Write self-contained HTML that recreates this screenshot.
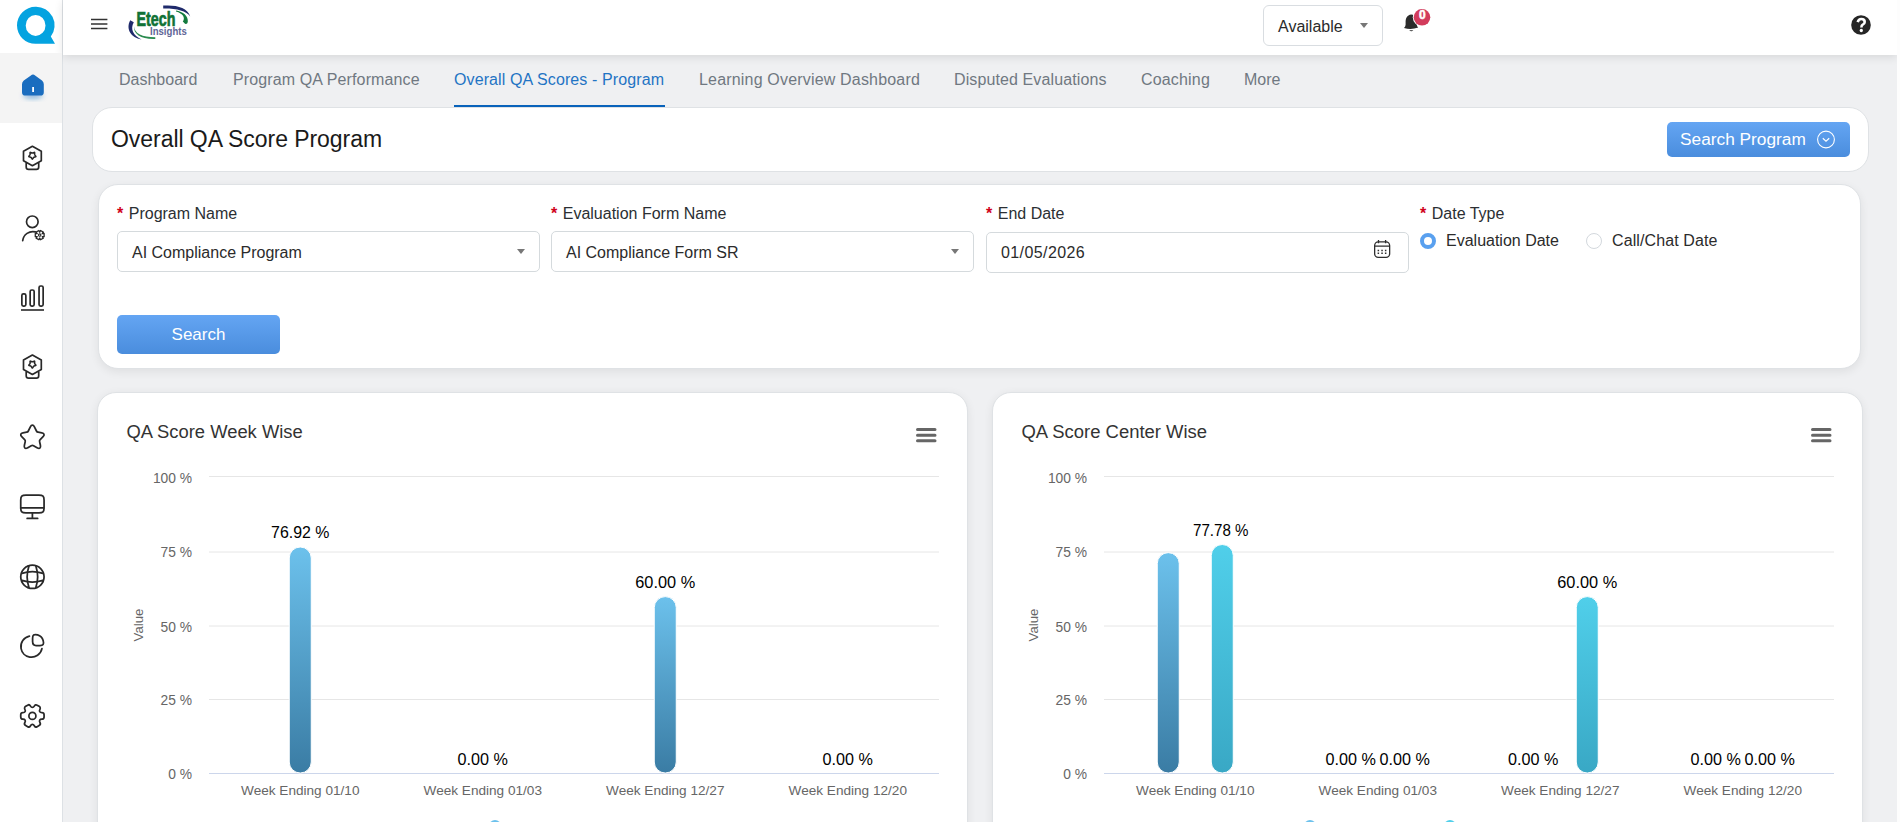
<!DOCTYPE html>
<html><head><meta charset="utf-8">
<style>
*{box-sizing:border-box;margin:0;padding:0}
html,body{width:1900px;height:822px;overflow:hidden;background:#eff0f2;font-family:"Liberation Sans",sans-serif;color:#222}
.abs{position:absolute}
#sidebar{position:absolute;left:0;top:0;width:63px;height:822px;background:#fff;border-right:1px solid #dde1e5}
#header{position:absolute;left:63px;top:0;width:1834px;height:55px;background:#fff;box-shadow:0 2px 9px rgba(0,0,0,.11)}
#rstrip{position:absolute;left:1897px;top:0;width:3px;height:822px;background:#fdfdfd}
.tab{position:absolute;top:70px;font-size:16px;color:#707881;white-space:nowrap;line-height:20px}
.tab.active{color:#1f74c4}
.card{position:absolute;background:#fff;border:1px solid #dfe2e5;border-radius:18px}
.lbl{position:absolute;top:204px;font-size:16px;color:#2b2f33;line-height:20px;white-space:nowrap}
.lbl b{color:#d0021b;font-weight:bold;margin-right:5.5px}
.inp{position:absolute;top:231px;height:41px;border:1px solid #d5dadd;border-radius:5px;background:#fff}
.inp span{position:absolute;left:14px;top:11px;font-size:16px;line-height:20px;color:#2b2b2b;white-space:nowrap}
.caret{position:absolute;width:0;height:0;border-left:4px solid transparent;border-right:4px solid transparent;border-top:5px solid #777}
.btn{position:absolute;background:linear-gradient(#64a5f3,#4a8ddd);border-radius:5px;color:#fff;white-space:nowrap}
svg{position:absolute;left:0;top:0;overflow:visible}
</style></head><body>
<div id="sidebar"></div>
<div id="header"></div>
<div id="rstrip"></div>

<!-- sidebar active item -->
<div class="abs" style="left:0;top:53px;width:62px;height:70px;background:#f4f4f4"></div>

<svg width="63" height="822" viewBox="0 0 63 822" style="left:0;top:0">
  <defs>
    <filter id="blur3" x="-50%" y="-50%" width="200%" height="200%"><feGaussianBlur stdDeviation="2.5"/></filter>
  </defs>
  <!-- Q logo -->
  <path fill="#04a3e0" fill-rule="evenodd" d="M35.5 6.8 A18.5 18.5 0 1 0 35.5 43.8 L55 43.8 L50.8 36.5 A18.5 18.5 0 0 0 35.5 6.8 Z M35.6 14.9 A9.9 10.5 0 1 1 35.6 35.9 A9.9 10.5 0 1 1 35.6 14.9 Z"/>
  <!-- home -->
  <ellipse cx="33" cy="95.5" rx="10" ry="3" fill="rgba(26,111,192,.5)" filter="url(#blur3)"/>
  <path fill="#1a6dbf" d="M30.9 75.4 Q33 73.8 35.1 75.4 L42 80.6 Q43.8 82 43.8 84.3 V92.2 Q43.8 95.6 40.4 95.6 H25.4 Q22 95.6 22 92.2 V84.3 Q22 82 23.8 80.6 Z"/>
  <rect x="32.2" y="87" width="1.8" height="5" fill="#fff"/>
  <g fill="none" stroke="#292929" stroke-width="1.7" stroke-linejoin="round" stroke-linecap="round">
    <!-- badge -->
    <g id="badge">
      <path d="M32.4 146.3 L41.3 151.2 V160.8 L32.4 165.7 L23.5 160.8 V151.2 Z"/>
      <path d="M26.2 163.2 V167 Q26.2 169.4 28.6 169.4 H36.3 Q38.7 169.4 38.7 167 V163.2"/>
      <path stroke-width="1.5" d="M32.65 158.94 Q32.35 159.40 32.05 158.94 L31.12 157.53 Q30.97 157.30 30.70 157.23 L29.08 156.78 Q28.55 156.64 28.89 156.20 L29.94 154.89 Q30.12 154.67 30.10 154.40 L30.02 152.72 Q30.00 152.16 30.52 152.36 L32.09 152.95 Q32.35 153.05 32.61 152.95 L34.18 152.36 Q34.70 152.16 34.68 152.72 L34.60 154.40 Q34.58 154.67 34.76 154.89 L35.81 156.20 Q36.15 156.64 35.62 156.78 L34.00 157.23 Q33.73 157.30 33.58 157.53 Z"/>
    </g>
    <use href="#badge" transform="translate(0 208.8)"/>
    <!-- person gear -->
    <circle cx="32.3" cy="221.8" r="5.8"/>
    <path d="M22.7 240.6 A10.2 10.2 0 0 1 35.4 231.9"/>
    <g transform="translate(39.7 235.1)">
      <path stroke-width="1.3" d="M2.51 -1.45 L4.42 -1.61 L4.42 1.61 L2.51 1.45 L3.60 3.02 L0.82 4.63 L0.00 2.90 L-0.82 4.63 L-3.60 3.02 L-2.51 1.45 L-4.42 1.61 L-4.42 -1.61 L-2.51 -1.45 L-3.60 -3.02 L-0.82 -4.63 L-0.00 -2.90 L0.82 -4.63 L3.60 -3.02 Z"/>
      <circle r="1.2" stroke-width="1.1"/>
    </g>
    <!-- bars -->
    <rect x="21.85" y="293.9" width="4" height="12.3" rx="1.6"/>
    <rect x="30.15" y="290" width="4" height="16.2" rx="1.6"/>
    <rect x="39.05" y="286" width="4.1" height="20.2" rx="1.6"/>
    <path stroke-linecap="butt" stroke-width="1.6" d="M21 310 H44"/>
    <!-- star -->
    <g transform="translate(18.4 422.8) scale(1.1667)" stroke-width="1.5">
      <path d="m13.73 3.51 1.76 3.52c.24.49.88.96 1.42 1.05l3.19.53c2.04.34 2.52 1.82 1.05 3.28l-2.48 2.48c-.42.42-.65 1.23-.52 1.81l.71 3.07c.56 2.43-.73 3.37-2.88 2.1l-2.99-1.77c-.54-.32-1.43-.32-1.980 0l-2.99 1.77c-2.14 1.27-3.44.32-2.88-2.1l.71-3.07c.13-.58-.1-1.39-.52-1.81l-2.48-2.48c-1.46-1.46-.99-2.94 1.05-3.28l3.19-.53c.53-.09 1.17-.56 1.41-1.05l1.76-3.52c.96-1.91 2.52-1.91 3.47 0Z"/>
    </g>
    <!-- monitor -->
    <g transform="translate(18.4 492.8) scale(1.1667)" stroke-width="1.5">
      <path d="M6.44 2h11.11C21.11 2 22 2.89 22 6.440v6.33c0 3.56-.89 4.44-4.44 4.44H6.44C2.89 17.22 2 16.33 2 12.78V6.44C2 2.89 2.89 2 6.44 2ZM12 17.22V22M2 13h20M7.5 22h9"/>
    </g>
    <!-- globe -->
    <g transform="translate(18.4 562.8) scale(1.1667)" stroke-width="1.5">
      <path d="M12 22c5.523 0 10-4.477 10-10S17.523 2 12 2 2 6.477 2 12s4.477 10 10 10Z"/>
      <path d="M8 3h1a28.424 28.424 0 0 0 0 18H8M15 3a28.424 28.424 0 0 1 0 18"/>
      <path d="M3 16v-1a28.424 28.424 0 0 0 18 0v1M3 9a28.424 28.424 0 0 1 18 0"/>
    </g>
    <!-- pie -->
    <g transform="translate(18.6 631.5) scale(1.1667)" stroke-width="1.5">
      <path d="M18.32 12c2.6 0 3.68-1 2.72-4.280-.65-2.210-2.55-4.110-4.76-4.760C12.96 2 12 3.080 12 5.680v2.880C12 11 13 12 15 12h3.320Z"/>
      <path d="M19.999 14.7a9.090 9.090 0 0 1-10.45 7.180c-3.790-.610-6.840-3.660-7.460-7.450A9.087 9.087 0 0 1 9.269 4.010"/>
    </g>
    <!-- gear -->
    <g transform="translate(18.4 701.9) scale(1.1667)" stroke-width="1.5">
      <path d="M12 15a3 3 0 1 0 0-6 3 3 0 0 0 0 6Z"/>
      <path d="M2 12.88v-1.76c0-1.040.85-1.900 1.900-1.900 1.810 0 2.550-1.280 1.640-2.850-.520-.900-.210-2.070.700-2.590l1.730-.990c.790-.470 1.810-.190 2.280.600l.110.190c.900 1.570 2.380 1.570 3.290 0l.110-.190c.470-.790 1.490-1.070 2.280-.600l1.730.990c.910.520 1.220 1.690.700 2.590-.910 1.570-.170 2.850 1.640 2.850 1.040 0 1.900.850 1.900 1.900v1.760c0 1.040-.850 1.900-1.900 1.900-1.810 0-2.550 1.280-1.640 2.850.520.910.210 2.070-.700 2.590l-1.730.990c-.790.470-1.810.190-2.280-.600l-.110-.190c-.900-1.570-2.380-1.570-3.290 0l-.110.190c-.470.790-1.490 1.070-2.280.600l-1.730-.990a1.899 1.899 0 0 1-.700-2.590c.910-1.570.170-2.850-1.640-2.850-1.050 0-1.900-.860-1.900-1.900Z"/>
    </g>
  </g>
</svg>

<svg width="1900" height="60" viewBox="0 0 1900 60">
  <!-- hamburger -->
  <path d="M91 19.5 H107.4 M91 24 H107.4 M91 28.4 H107.4" stroke="#333" stroke-width="1.5" fill="none"/>
  <!-- Etech logo -->
  <path d="M163.2 5.6 C176 4.6 187.5 7.5 190.2 16.5 C186.5 10.5 176 8.2 163.2 8.4 Z" fill="#1f2a6b"/>
  <path d="M176 10.4 C183 11.6 188.5 15.5 187.8 22 Q187.3 24.5 185 23.8 L182.8 21.6 C185.6 17.5 183 13.5 176 11.4 Z" fill="#137a3e"/>
  <path d="M130.2 20.3 L133.8 22.3 C130 29 133 35.5 141.5 39.5 C131 38 125.5 29 130.2 20.3 Z" fill="#1f2a6b"/>
  <path d="M134 26.5 C134.5 33.5 142 37.2 155.3 37.2 L155.3 39 C141 39.5 133.3 34 134 26.5 Z" fill="#2a8a4e"/>
  <text x="136.6" y="25.7" font-family="Liberation Sans" font-weight="bold" font-size="19.5" fill="#107236" stroke="#107236" stroke-width="0.7" textLength="38.8" lengthAdjust="spacingAndGlyphs">Etech</text>
  <text x="150" y="34.6" font-family="Liberation Sans" font-weight="bold" font-size="10" fill="#5f6696" textLength="36.8" lengthAdjust="spacingAndGlyphs">Insights</text>
  <!-- bell -->
  <path d="M1411.3 14.6 C1406.8 15 1405.6 18.8 1405.6 22.3 V24.8 Q1405.5 26.8 1404 28 Q1411 30 1418.2 27.6 Q1416.9 26.4 1416.7 24.4 V22.3 C1416.7 18.8 1415.8 15 1411.3 14.6 Z" fill="#2b2b2b"/>
  <path d="M1409.2 30.3 Q1411.3 32.4 1413.4 30.3 Z" fill="#2b2b2b"/>
  <circle cx="1422" cy="17.3" r="9.2" fill="#fff"/>
  <circle cx="1422" cy="17.3" r="8.3" fill="#d23c5c"/>
  <text x="1422.3" y="19.1" text-anchor="middle" font-family="Liberation Sans" font-weight="bold" font-size="12" fill="#fff" stroke="#fff" stroke-width="0.5">0</text>
  <!-- help -->
  <circle cx="1861" cy="25" r="9.8" fill="#262626"/>
  <path d="M1857.7 22.2 Q1858.6 19 1861.3 19 Q1864.7 19 1864.7 21.9 Q1864.7 23.7 1862.7 24.7 Q1861.4 25.4 1861.4 27.6" stroke="#fff" stroke-width="2.6" fill="none"/><circle cx="1861.3" cy="30.5" r="1.65" fill="#fff"/>
</svg>
<div class="abs" style="left:1263px;top:5px;width:120px;height:41px;border:1px solid #d9dde1;border-radius:6px;background:#fff"></div>
<div class="abs" style="left:1278px;top:17px;font-size:16px;line-height:20px;color:#2b2b2b">Available</div>
<div class="caret" style="left:1360px;top:23px"></div>


<div class="tab" style="left:119px">Dashboard</div>
<div class="tab" style="left:233px;letter-spacing:.12px">Program QA Performance</div>
<div class="tab active" style="left:454px;letter-spacing:.11px">Overall QA Scores - Program</div>
<div class="tab" style="left:699px;letter-spacing:.18px">Learning Overview Dashboard</div>
<div class="tab" style="left:954px;letter-spacing:.11px">Disputed Evaluations</div>
<div class="tab" style="left:1141px;letter-spacing:.17px">Coaching</div>
<div class="tab" style="left:1244px">More</div>
<div class="abs" style="left:454px;top:105px;width:211px;height:2px;background:#0862ba"></div>

<div class="card" style="left:92px;top:107px;width:1777px;height:65px;border-radius:20px"></div>
<div class="card" style="left:98px;top:184px;width:1763px;height:185px;border-radius:20px;box-shadow:0 3px 10px rgba(0,0,0,.07)"></div>
<div class="card" style="left:97px;top:392px;width:871px;height:460px;border-radius:19px;box-shadow:0 2px 10px rgba(0,0,0,.07)"></div>
<div class="card" style="left:992px;top:392px;width:871px;height:460px;border-radius:19px;box-shadow:0 2px 10px rgba(0,0,0,.07)"></div>

<div class="abs" style="left:111px;top:126px;font-size:23px;line-height:26px;color:#1a1a1a;white-space:nowrap;letter-spacing:-.05px">Overall QA Score Program</div>
<div class="btn" style="left:1667px;top:122px;width:183px;height:35px">
  <span class="abs" style="left:13px;top:7px;font-size:17.3px;line-height:20px">Search Program</span>
  <svg width="20" height="20" viewBox="0 0 20 20" style="left:149px;top:8px"><circle cx="10" cy="9.5" r="8.4" fill="none" stroke="#fff" stroke-width="1.1"/><path d="M6.8 8.3 L10 11.2 L13.2 8.3" fill="none" stroke="#fff" stroke-width="1.2"/></svg>
</div>

<div class="lbl" style="left:117px"><b>*</b>Program Name</div>
<div class="lbl" style="left:551px"><b>*</b>Evaluation Form Name</div>
<div class="lbl" style="left:986px"><b>*</b>End Date</div>
<div class="lbl" style="left:1420px"><b>*</b>Date Type</div>

<div class="inp" style="left:117px;width:423px"><span>AI Compliance Program</span><div class="caret" style="left:399px;top:17px"></div></div>
<div class="inp" style="left:551px;width:423px"><span>AI Compliance Form SR</span><div class="caret" style="left:399px;top:17px"></div></div>
<div class="inp" style="left:986px;top:232px;width:423px"><span style="letter-spacing:.4px;top:9.5px">01/05/2026</span>
  <svg width="22" height="22" viewBox="0 0 22 22" style="left:385.2px;top:5.2px">
    <rect x="2.65" y="3.85" width="15" height="15.5" rx="3.6" fill="none" stroke="#2e2e2e" stroke-width="1.3"/>
    <path d="M2.65 8.2 H17.65 M6.5 2 V5.3 M13.6 2 V5.3" stroke="#2e2e2e" stroke-width="1.3" fill="none"/>
    <path d="M5.6 12.5 h1.5 M9.3 12.5 h1.5 M12.9 12.5 h1.5 M5.6 15.2 h1.5 M9.3 15.2 h1.5 M12.9 15.2 h1.5" stroke="#2e2e2e" stroke-width="1.4"/>
  </svg>
</div>

<div class="abs" style="left:1420px;top:233px;width:16px;height:16px;border-radius:50%;border:4px solid #59a0ef;background:#fff"></div>
<div class="abs" style="left:1446px;top:231px;font-size:16px;line-height:20px;color:#2b2b2b;white-space:nowrap">Evaluation Date</div>
<div class="abs" style="left:1586px;top:233px;width:16px;height:16px;border-radius:50%;border:1px solid #d3d8dd;background:#fff"></div>
<div class="abs" style="left:1612px;top:231px;font-size:16px;line-height:20px;color:#2b2b2b;white-space:nowrap;letter-spacing:.1px">Call/Chat Date</div>

<div class="btn" style="left:117px;top:315px;width:163px;height:39px;text-align:center">
  <span style="display:block;margin-top:10px;font-size:17px;line-height:20px">Search</span>
</div>


<!-- CHARTS -->
<svg width="1900" height="822" viewBox="0 0 1900 822" font-family="Liberation Sans">
<defs><linearGradient id="g1" x1="0" y1="0" x2="0" y2="1"><stop offset="0" stop-color="#6cc1ec"/><stop offset="1" stop-color="#3a7ca4"/></linearGradient>
<linearGradient id="g2" x1="0" y1="0" x2="0" y2="1"><stop offset="0" stop-color="#50cfea"/><stop offset="1" stop-color="#39a8c5"/></linearGradient></defs>
<text x="126.5" y="437.5" font-size="18" fill="#333" textLength="176.2" lengthAdjust="spacingAndGlyphs">QA Score Week Wise</text>
<path d="M917.5 429.6 H935 M917.5 435.2 H935 M917.5 440.8 H935" stroke="#666" stroke-width="3" stroke-linecap="round"/>
<path d="M209 476.5 H939" stroke="#e6e6e6" stroke-width="1"/>
<path d="M209 552 H939" stroke="#e6e6e6" stroke-width="1"/>
<path d="M209 626 H939" stroke="#e6e6e6" stroke-width="1"/>
<path d="M209 699.5 H939" stroke="#e6e6e6" stroke-width="1"/>
<path d="M209 773.5 H939" stroke="#ccd6eb" stroke-width="1"/>
<text x="192" y="483" text-anchor="end" font-size="13.8" fill="#666">100 %</text>
<text x="192" y="557" text-anchor="end" font-size="13.8" fill="#666">75 %</text>
<text x="192" y="632" text-anchor="end" font-size="13.8" fill="#666">50 %</text>
<text x="192" y="705" text-anchor="end" font-size="13.8" fill="#666">25 %</text>
<text x="192" y="779" text-anchor="end" font-size="13.8" fill="#666">0 %</text>
<text transform="translate(143 625) rotate(-90)" text-anchor="middle" font-size="13.2" fill="#666">Value</text>
<text x="300.25" y="795.3" text-anchor="middle" font-size="13.6" fill="#666">Week Ending 01/10</text>
<text x="482.75" y="795.3" text-anchor="middle" font-size="13.6" fill="#666">Week Ending 01/03</text>
<text x="665.25" y="795.3" text-anchor="middle" font-size="13.6" fill="#666">Week Ending 12/27</text>
<text x="847.75" y="795.3" text-anchor="middle" font-size="13.6" fill="#666">Week Ending 12/20</text>
<rect x="289.25" y="547.02" width="22" height="225.98" rx="11" fill="url(#g1)" stroke="#fff" stroke-width="1"/>
<text x="300.25" y="538.22" text-anchor="middle" font-size="16.4" fill="#000" textLength="58.3" lengthAdjust="spacingAndGlyphs">76.92 %</text>
<text x="482.75" y="764.80" text-anchor="middle" font-size="16.4" fill="#000" textLength="50.4" lengthAdjust="spacingAndGlyphs">0.00 %</text>
<rect x="654.25" y="596.60" width="22" height="176.40" rx="11" fill="url(#g1)" stroke="#fff" stroke-width="1"/>
<text x="665.25" y="587.80" text-anchor="middle" font-size="16.4" fill="#000" textLength="60" lengthAdjust="spacingAndGlyphs">60.00 %</text>
<text x="847.75" y="764.80" text-anchor="middle" font-size="16.4" fill="#000" textLength="50.4" lengthAdjust="spacingAndGlyphs">0.00 %</text>
<text x="1021.5" y="437.5" font-size="18" fill="#333" textLength="185.6" lengthAdjust="spacingAndGlyphs">QA Score Center Wise</text>
<path d="M1812.5 429.6 H1830 M1812.5 435.2 H1830 M1812.5 440.8 H1830" stroke="#666" stroke-width="3" stroke-linecap="round"/>
<path d="M1104 476.5 H1834" stroke="#e6e6e6" stroke-width="1"/>
<path d="M1104 552 H1834" stroke="#e6e6e6" stroke-width="1"/>
<path d="M1104 626 H1834" stroke="#e6e6e6" stroke-width="1"/>
<path d="M1104 699.5 H1834" stroke="#e6e6e6" stroke-width="1"/>
<path d="M1104 773.5 H1834" stroke="#ccd6eb" stroke-width="1"/>
<text x="1087" y="483" text-anchor="end" font-size="13.8" fill="#666">100 %</text>
<text x="1087" y="557" text-anchor="end" font-size="13.8" fill="#666">75 %</text>
<text x="1087" y="632" text-anchor="end" font-size="13.8" fill="#666">50 %</text>
<text x="1087" y="705" text-anchor="end" font-size="13.8" fill="#666">25 %</text>
<text x="1087" y="779" text-anchor="end" font-size="13.8" fill="#666">0 %</text>
<text transform="translate(1038 625) rotate(-90)" text-anchor="middle" font-size="13.2" fill="#666">Value</text>
<text x="1195.25" y="795.3" text-anchor="middle" font-size="13.6" fill="#666">Week Ending 01/10</text>
<text x="1377.75" y="795.3" text-anchor="middle" font-size="13.6" fill="#666">Week Ending 01/03</text>
<text x="1560.25" y="795.3" text-anchor="middle" font-size="13.6" fill="#666">Week Ending 12/27</text>
<text x="1742.75" y="795.3" text-anchor="middle" font-size="13.6" fill="#666">Week Ending 12/20</text>
<rect x="1157.25" y="552.65" width="22" height="220.35" rx="11" fill="url(#g1)" stroke="#fff" stroke-width="1"/>
<text x="1350.75" y="764.80" text-anchor="middle" font-size="16.4" fill="#000" textLength="50.4" lengthAdjust="spacingAndGlyphs">0.00 %</text>
<text x="1533.25" y="764.80" text-anchor="middle" font-size="16.4" fill="#000" textLength="50.4" lengthAdjust="spacingAndGlyphs">0.00 %</text>
<text x="1715.75" y="764.80" text-anchor="middle" font-size="16.4" fill="#000" textLength="50.4" lengthAdjust="spacingAndGlyphs">0.00 %</text>
<rect x="1211.25" y="544.50" width="22" height="228.50" rx="11" fill="url(#g2)" stroke="#fff" stroke-width="1"/>
<text x="1220.75" y="535.70" text-anchor="middle" font-size="16.4" fill="#000" textLength="55.5" lengthAdjust="spacingAndGlyphs">77.78 %</text>
<text x="1404.75" y="764.80" text-anchor="middle" font-size="16.4" fill="#000" textLength="50.4" lengthAdjust="spacingAndGlyphs">0.00 %</text>
<rect x="1576.25" y="596.60" width="22" height="176.40" rx="11" fill="url(#g2)" stroke="#fff" stroke-width="1"/>
<text x="1587.25" y="587.80" text-anchor="middle" font-size="16.4" fill="#000" textLength="60" lengthAdjust="spacingAndGlyphs">60.00 %</text>
<text x="1769.75" y="764.80" text-anchor="middle" font-size="16.4" fill="#000" textLength="50.4" lengthAdjust="spacingAndGlyphs">0.00 %</text>
<circle cx="495" cy="826" r="6" fill="#6cc1ec"/>
<circle cx="1310" cy="826" r="6" fill="#6cc1ec"/>
<circle cx="1450" cy="826" r="6" fill="#50cfea"/>
</svg>
<!-- /CHARTS -->

</body></html>
